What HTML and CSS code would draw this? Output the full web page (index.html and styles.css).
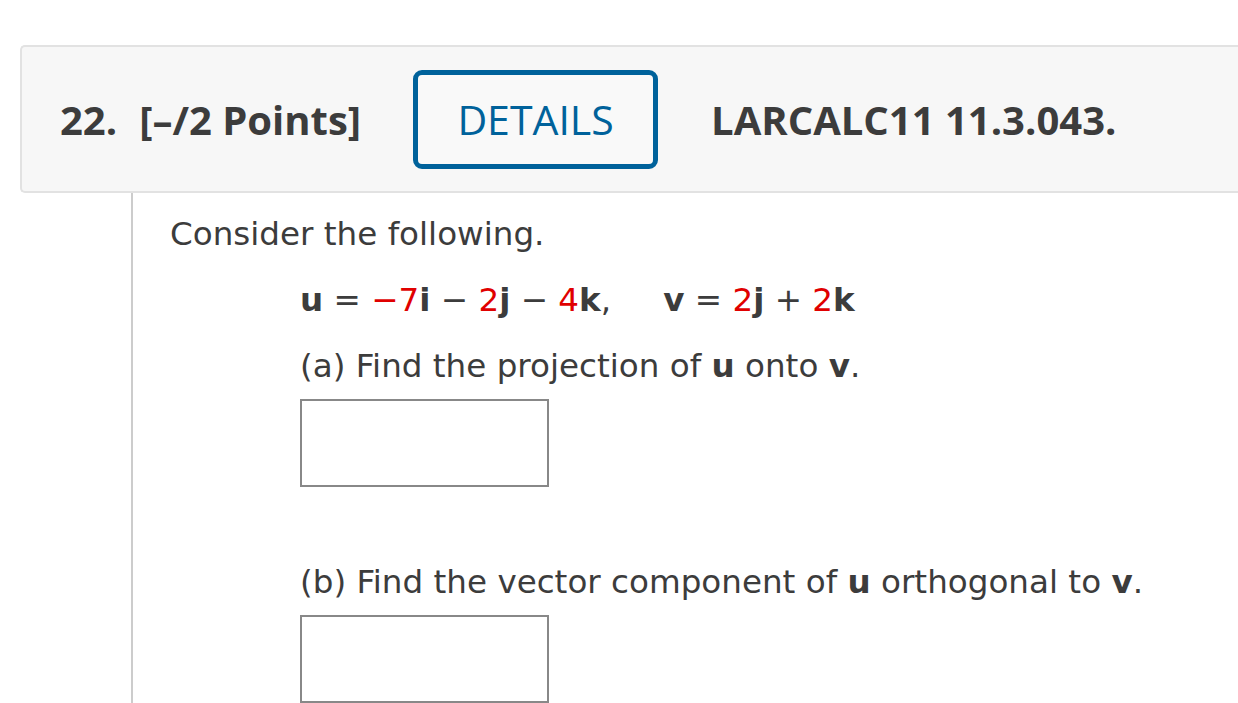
FILE: index.html
```html
<!DOCTYPE html>
<html>
<head>
<meta charset="utf-8">
<link rel="stylesheet" href="styles.css">
</head>
<body>
<div class="page">
  <div class="qhead">
    <span class="qnum">22.</span>
    <span class="qpts">[–/2 Points]</span>
    <button class="details">DETAILS</button>
    <span class="qref">LARCALC11 11.3.043.</span>
  </div>
  <div class="qbody">
    <p class="intro">Consider the following.</p>
    <p class="math"><b>u</b> = <span class="red">−7</span><b>i</b> − <span class="red">2</span><b>j</b> − <span class="red">4</span><b>k</b>,<span class="sp"></span><b>v</b> = <span class="red">2</span><b>j</b> + <span class="red">2</span><b>k</b></p>
    <div class="part">
      <p class="ptext">(a) Find the projection of <b>u</b> onto <b>v</b>.</p>
      <div class="answer"></div>
    </div>
    <div class="part partb">
      <p class="ptext">(b) Find the vector component of <b>u</b> orthogonal to <b>v</b>.</p>
      <div class="answer"></div>
    </div>
  </div>
</div>
</body>
</html>
```
FILE: styles.css
```css
html, body {
  margin: 0;
  padding: 0;
  background: #fff;
  overflow: hidden;
}
.page {
  padding-top: 45px;
  color: #3c3c3c;
  height: 658px;
  overflow: hidden;
}
.qhead {
  margin-left: 20px;
  height: 144px;
  background: #f7f7f7;
  border: 2px solid #e2e2e2;
  border-right: none;
  border-radius: 5px 0 0 5px;
  display: flex;
  align-items: center;
  font-family: "Open Sans", sans-serif;
  font-weight: 700;
  font-size: 40px;
  color: #3c3c3c;
  box-sizing: content-box;
}
.qnum {
  margin-left: 38px;
}
.qpts {
  margin-left: 22px;
}
.details {
  margin-left: 52px;
  width: 245px;
  height: 99px;
  border: 5px solid #00629b;
  border-radius: 9px;
  background: #f9f9f9;
  color: #00629b;
  font-family: "Open Sans", sans-serif;
  font-size: 41px;
  font-weight: 500;
  padding: 0;
}
.qref {
  margin-left: 53px;
}
.qbody {
  margin-left: 131px;
  border-left: 2px solid #cccccc;
  padding-left: 37px;
  padding-top: 18px;
  height: 600px;
  font-family: "DejaVu Sans", Verdana, sans-serif;
  font-size: 32.6px;
}
.qbody p {
  margin: 0;
}
.intro {
  line-height: 46px;
}
.math {
  margin-left: 130px !important;
  margin-top: 20px !important;
  line-height: 46px;
}
.math b, .ptext b {
  font-weight: 700;
}
.red {
  color: #e00000;
}
.sp {
  display: inline-block;
  width: 52px;
}
.part {
  margin-left: 130px;
  margin-top: 20px;
}
.ptext {
  line-height: 46px;
}
.answer {
  margin-top: 10px;
  width: 245px;
  height: 84px;
  border: 2px solid #888;
  background: #fff;
}
.partb {
  margin-top: 72px;
}
```
